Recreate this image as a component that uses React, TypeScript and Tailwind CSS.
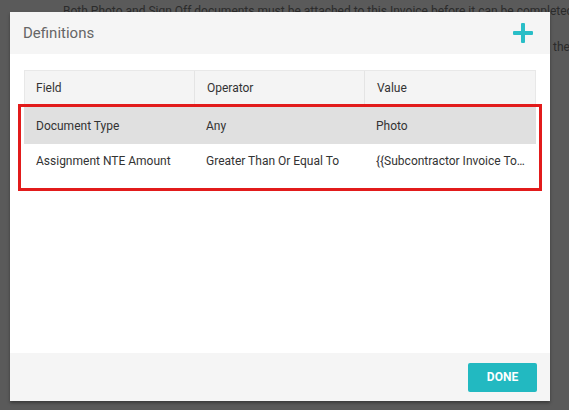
import React from "react";

const rows = [
  { field: "Document Type", op: "Any", value: "Photo", bg: "bg-[#e0e0e0]" },
  { field: "Assignment NTE Amount", op: "Greater Than Or Equal To", value: "{{Subcontractor Invoice Total}}", bg: "bg-white" },
];

export default function App() {
  return (
    <div className="relative w-[569px] h-[410px] overflow-hidden bg-[#5a5a5a] font-['Roboto',sans-serif]">
      <div className="pl-[63px] pt-[3px] text-[12px] leading-[16px] text-[#2b2b2b] whitespace-nowrap">
        Both Photo and Sign Off documents must be attached to this Invoice before it can be completed. A
      </div>
      <div className="pl-[553px] pt-[20px] text-[12px] leading-[16px] text-[#2b2b2b] whitespace-nowrap">the</div>

      <div className="absolute left-[10px] top-[12px] w-[540px] h-[389px] flex flex-col bg-white shadow-[0_2px_3px_rgba(0,0,0,0.35)]">
        <div className="h-[42px] shrink-0 bg-[#f5f5f5] flex items-center justify-between pl-[13px] pr-[17px]">
          <span className="text-[15px] text-[#666666]">Definitions</span>
          <svg width="20" height="20" viewBox="0 0 20 20">
            <rect x="8" y="0" width="4" height="20" rx="1" fill="#29bec7" />
            <rect x="0" y="8" width="20" height="4" rx="1" fill="#29bec7" />
          </svg>
        </div>
        <div className="flex-1 px-[14px] pt-[16px]">
          <div className="w-[512px] text-[12px] text-[#333333]">
            <div className="grid grid-cols-[170px_170px_172px] h-[34px] bg-[#f4f4f4] border-t border-x border-[#e8e8e8]">
              <div className="flex items-center pl-[11px] border-r border-[#e4e4e4]">Field</div>
              <div className="flex items-center pl-[12px] border-r border-[#e4e4e4]">Operator</div>
              <div className="flex items-center pl-[12px]">Value</div>
            </div>
            {rows.map((r, i) => (
              <div key={i} className={`grid grid-cols-[170px_170px_172px] ${i === 0 ? "h-[40px] pt-[3px]" : "h-[33px]"} ${r.bg}`}>
                <div className="flex items-center pl-[12px] whitespace-nowrap overflow-hidden">{r.field}</div>
                <div className="flex items-center pl-[12px] whitespace-nowrap overflow-hidden">{r.op}</div>
                <div className="flex items-center pl-[12px] pr-[8px] min-w-0">
                  <span className="block whitespace-nowrap overflow-hidden text-ellipsis">{r.value}</span>
                </div>
              </div>
            ))}
          </div>
        </div>
        <div className="h-[48px] shrink-0 bg-[#f5f5f5] flex items-center justify-end pr-[13px]">
          <button className="w-[69px] h-[29px] rounded-[2px] bg-[#22b9c1] text-white text-[12px] font-bold">DONE</button>
        </div>
      </div>

      <div className="absolute left-[18px] top-[104px] w-[524px] h-[87px] border-[3px] border-[#e21b1b] pointer-events-none" />
    </div>
  );
}
